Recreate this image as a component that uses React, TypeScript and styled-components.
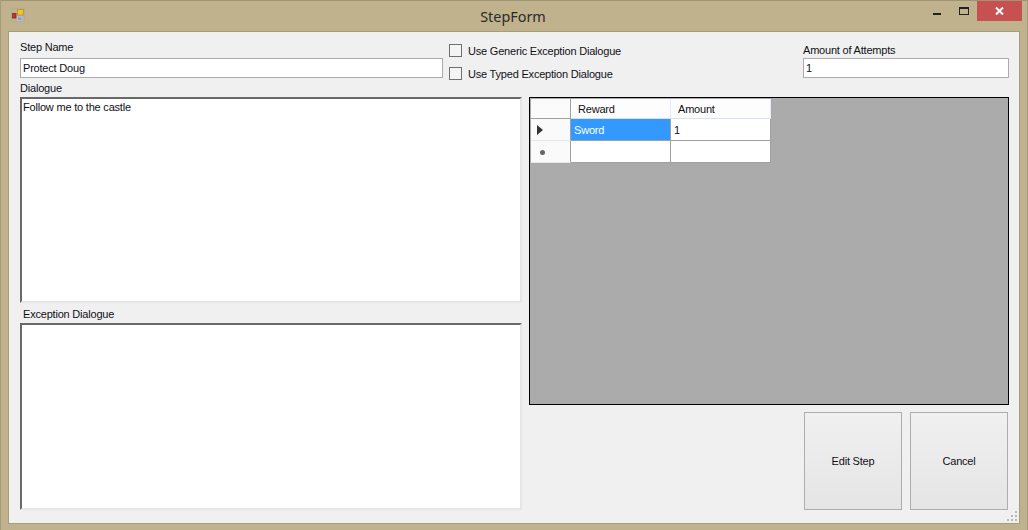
import styled, { createGlobalStyle } from 'styled-components';

const uiFont = `11px "Liberation Sans", Arial, sans-serif`;

const GlobalStyle = createGlobalStyle`
  html, body {
    margin: 0;
    padding: 0;
    background: #c0b28c;
  }
  body {
    font-family: "Liberation Sans", Arial, sans-serif;
    font-size: 11px;
    letter-spacing: -0.2px;
    color: #101018;
  }
`;

const AppIcon = () => (
  <svg width="14" height="14" viewBox="0 0 14 14">
    <rect x="0.5" y="0.5" width="13" height="13" fill="none" stroke="#b3ac98" />
    <rect x="1.5" y="5.5" width="3.5" height="4.5" fill="#c8352c" stroke="#7a1f1a" strokeWidth="0.7" />
    <rect x="6.5" y="1.5" width="6" height="5.5" fill="#f2c230" stroke="#b48a1c" strokeWidth="0.7" />
    <rect x="6.5" y="9" width="4.5" height="3.5" fill="#7ea2dc" stroke="#b9c9e6" strokeWidth="0.7" />
  </svg>
);

const CloseGlyph = () => (
  <svg width="9" height="8" viewBox="0 0 9 8">
    <path d="M1 0.5 L8 7.5 M8 0.5 L1 7.5" stroke="#fff" strokeWidth="2" fill="none" />
  </svg>
);

export default function App() {
  return (
    <>
      <GlobalStyle />
      <Window>
        <TitleBar>
          <IconSlot>
            <AppIcon />
          </IconSlot>
          <Title>StepForm</Title>
          <WindowButtons>
            <MinimizeButton>
              <MinimizeBar />
            </MinimizeButton>
            <MaximizeButton>
              <MaximizeBox />
            </MaximizeButton>
            <CloseButton>
              <CloseGlyph />
            </CloseButton>
          </WindowButtons>
        </TitleBar>
        <Client>
          <TopRow>
            <NameField>
              <FieldLabel>Step Name</FieldLabel>
              <TextInput defaultValue="Protect Doug" />
            </NameField>
            <CheckColumn>
              <CheckRow>
                <CheckBox />
                <span>Use Generic Exception Dialogue</span>
              </CheckRow>
              <CheckRow>
                <CheckBox />
                <span>Use Typed Exception Dialogue</span>
              </CheckRow>
            </CheckColumn>
            <AttemptsField>
              <AttemptsLabel>Amount of Attempts</AttemptsLabel>
              <TextInput defaultValue="1" />
            </AttemptsField>
          </TopRow>
          <BodyRow>
            <LeftColumn>
              <DialogueLabel>Dialogue</DialogueLabel>
              <DialogueArea defaultValue="Follow me to the castle" />
              <ExceptionLabel>Exception Dialogue</ExceptionLabel>
              <ExceptionArea defaultValue="" />
            </LeftColumn>
            <RightColumn>
              <GridView>
                <GridRows>
                  <CornerCell />
                  <HeaderCell>Reward</HeaderCell>
                  <HeaderCell>Amount</HeaderCell>
                  <RowHeader>
                    <CurrentArrow />
                  </RowHeader>
                  <DataCell $selected>Sword</DataCell>
                  <DataCell>1</DataCell>
                  <RowHeader>
                    <NewRowMark />
                  </RowHeader>
                  <DataCell />
                  <DataCell />
                </GridRows>
              </GridView>
              <ButtonRow>
                <ActionButton>Edit Step</ActionButton>
                <ActionButton>Cancel</ActionButton>
              </ButtonRow>
            </RightColumn>
          </BodyRow>
          <SizeGrip>
            <svg width="11" height="11" viewBox="0 0 11 11">
              <path
                d="M8 0h2v2H8zM4 4h2v2H4zM8 4h2v2H8zM0 8h2v2H0zM4 8h2v2H4zM8 8h2v2H8z"
                fill="#b8b8b8"
              />
            </svg>
          </SizeGrip>
        </Client>
      </Window>
    </>
  );
}

const Window = styled.div`
  box-sizing: border-box;
  width: 1028px;
  height: 530px;
  background: #c0b28c;
  border-top: 1px solid #a09477;
  border-left: 1px solid #a89c7e;
  border-right: 1px solid #a89c7e;
  padding: 0 7px 6px 7px;
  display: flex;
  flex-direction: column;
`;

const TitleBar = styled.div`
  height: 30px;
  flex: none;
  position: relative;
  display: flex;
  align-items: center;
  justify-content: center;
  margin: 0 -7px;
  padding: 0 7px;
`;

const IconSlot = styled.div`
  position: absolute;
  left: 10px;
  top: 7px;
  width: 14px;
  height: 14px;
`;

const Title = styled.div`
  font-family: "Noto Sans", "Open Sans", sans-serif;
  font-size: 14.4px;
  letter-spacing: 0;
  color: #2a2a2a;
  margin-top: 1px;
  margin-right: 2px;
`;

const WindowButtons = styled.div`
  position: absolute;
  right: 5px;
  top: 0;
  display: flex;
  height: 20px;
`;

const MinimizeButton = styled.div`
  width: 27px;
  height: 20px;
  position: relative;
`;

const MinimizeBar = styled.div`
  position: absolute;
  left: 10px;
  top: 12px;
  width: 8px;
  height: 2px;
  background: #222;
`;

const MaximizeButton = styled.div`
  width: 27px;
  height: 20px;
  position: relative;
`;

const MaximizeBox = styled.div`
  position: absolute;
  left: 9px;
  top: 6px;
  box-sizing: border-box;
  width: 10px;
  height: 8px;
  border: 1px solid #222;
  border-top-width: 2px;
`;

const CloseButton = styled.div`
  width: 45px;
  height: 20px;
  background: #c75050;
  display: flex;
  align-items: center;
  justify-content: center;
`;

const Client = styled.div`
  position: relative;
  box-sizing: border-box;
  flex: 1;
  background: #f0f0f0;
  border: 1px solid #a89c7e;
  padding: 9px 11px 0 11px;
  display: flex;
  flex-direction: column;
`;

const TopRow = styled.div`
  display: flex;
  height: 47px;
  flex: none;
`;

const NameField = styled.div`
  width: 423px;
  flex: none;
`;

const AttemptsField = styled.div`
  width: 206px;
  flex: none;
  margin-left: auto;
  margin-right: -1px;
`;

const FieldLabel = styled.div`
  height: 17px;
  line-height: 13px;
`;

const AttemptsLabel = styled(FieldLabel)`
  line-height: 19px;
`;

const TextInput = styled.input`
  display: block;
  box-sizing: border-box;
  width: 100%;
  height: 20px;
  border: 1px solid #ababad;
  background: #fff;
  padding: 0 2px;
  margin: 0;
  outline: none;
  font: ${uiFont};
  letter-spacing: -0.2px;
  color: #101018;
`;

const CheckColumn = styled.div`
  margin-left: 6px;
  padding-top: 3px;
  display: flex;
  flex-direction: column;
  gap: 10px;
`;

const CheckRow = styled.label`
  display: flex;
  align-items: center;
  gap: 6px;
  height: 13px;
`;

const CheckBox = styled.span`
  box-sizing: border-box;
  width: 13px;
  height: 13px;
  border: 1px solid #707070;
  background: #f4f4f4;
`;

const BodyRow = styled.div`
  display: flex;
  gap: 7px;
`;

const LeftColumn = styled.div`
  width: 502px;
  flex: none;
  display: flex;
  flex-direction: column;
`;

const RightColumn = styled.div`
  flex: 1;
  margin-top: 9px;
  display: flex;
  flex-direction: column;
`;

const DialogueLabel = styled.div`
  height: 9px;
  line-height: 11px;
  margin-top: -5px;
  margin-bottom: 5px;
`;

const ExceptionLabel = styled.div`
  height: 20px;
  line-height: 22px;
  padding-left: 3px;
`;

const MultiLine = styled.textarea`
  display: block;
  box-sizing: border-box;
  width: 100%;
  margin: 0;
  resize: none;
  outline: none;
  overflow: hidden;
  background: #fff;
  border: 2px solid #e6e6e6;
  border-top-color: #696969;
  border-left-color: #696969;
  padding: 1px 1px;
  font: 11px/14px "Liberation Sans", Arial, sans-serif;
  letter-spacing: -0.2px;
  color: #101018;
`;

const DialogueArea = styled(MultiLine)`
  height: 206px;
`;

const ExceptionArea = styled(MultiLine)`
  height: 187px;
`;

const GridView = styled.div`
  box-sizing: border-box;
  width: 480px;
  height: 308px;
  border: 1px solid #000;
  background: #ababab;
  padding: 1px;
`;

const GridRows = styled.div`
  display: grid;
  grid-template-columns: 40px 100px 100px;
  grid-template-rows: 20px 22px 22px;
  width: 240px;
`;

const CornerCell = styled.div`
  background: #fbfbfb;
  border-right: 1px solid #a0a0a0;
  border-bottom: 1px solid #a0a0a0;
`;

const HeaderCell = styled.div`
  background: #fdfdfd;
  border-right: 1px solid #e3ebf6;
  border-bottom: 1px solid #d8e2ee;
  padding-left: 7px;
  line-height: 20px;
`;

const RowHeader = styled.div`
  background: #fafafa;
  border-right: 1px solid #a0a0a0;
  border-bottom: 1px solid #e3e8ef;
  display: flex;
  align-items: center;
  justify-content: flex-start;
`;

const CurrentArrow = styled.span`
  margin-left: 6px;
  width: 0;
  height: 0;
  border-left: 6px solid #333;
  border-top: 5px solid transparent;
  border-bottom: 5px solid transparent;
`;

const NewRowMark = styled.span`
  margin-left: 9px;
  margin-top: 1px;
  width: 5px;
  height: 5px;
  border-radius: 50%;
  background: #666;
`;

const DataCell = styled.div<{ $selected?: boolean }>`
  background: ${({ $selected }) => ($selected ? '#3399ff' : '#fff')};
  color: ${({ $selected }) => ($selected ? '#fff' : '#101018')};
  border-right: 1px solid #a0a0a0;
  border-bottom: 1px solid #a0a0a0;
  padding-left: 3px;
  line-height: 22px;
`;

const ButtonRow = styled.div`
  display: flex;
  justify-content: flex-end;
  gap: 8px;
  margin-top: 7px;
  padding-right: 1px;
`;

const ActionButton = styled.button`
  box-sizing: border-box;
  width: 98px;
  height: 98px;
  border: 1px solid #adadad;
  background: linear-gradient(#f0f0f0, #e5e5e5);
  font: ${uiFont};
  letter-spacing: -0.2px;
  color: #101018;
  padding: 0;
`;

const SizeGrip = styled.div`
  position: absolute;
  right: 1px;
  bottom: 1px;
  width: 11px;
  height: 11px;
`;
